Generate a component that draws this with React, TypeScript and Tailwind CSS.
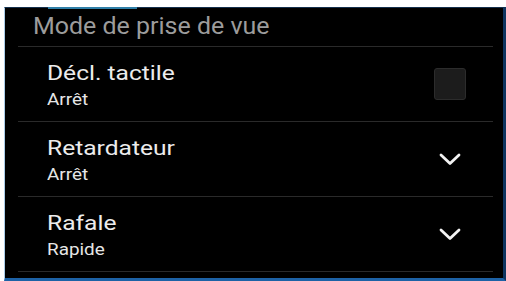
import React from "react";

const Chevron = () => (
  <svg width="22" height="13" viewBox="0 0 22 13" fill="none">
    <path d="M2 2 L11 10.5 L20 2" stroke="#f2f2f2" strokeWidth="2.8" strokeLinecap="round" strokeLinejoin="round" />
  </svg>
);

const Row = ({ title, sub, right }: { title: string; sub: string; right: React.ReactNode }) => (
  <div className="flex flex-col">
    <div className="h-[74px] flex items-center pl-[42px] pr-[37px]">
      <div className="flex-1 flex flex-col items-start pt-[2px]">
        <div className="text-[21px] leading-[24px] text-[#ececec] origin-left scale-x-[1.17]">{title}</div>
        <div className="text-[16px] leading-[20px] text-[#e6e6e6] mt-[5px] origin-left scale-x-[1.18]">{sub}</div>
      </div>
      <div className="w-[32px] flex items-center justify-center">{right}</div>
    </div>
    <div className="h-px bg-[#2a2a2a] ml-[13px] mr-[10px]" />
  </div>
);

export default function App() {
  return (
    <div className="w-[506px] h-[281px] bg-white pt-[7px] pl-[4px] relative" style={{ fontFamily: "Roboto, 'Noto Sans', sans-serif" }}>
      <div className="h-[274px] bg-black border-l border-l-[#a9cbe6] border-r-[3px] border-r-[#0e3560] border-t border-t-[#14304d] border-b-[3px] border-b-[#1d62a6] flex flex-col">
        <div className="h-[39px] flex flex-col">
          <div className="h-[38px] pl-[28px] pt-[4px] flex items-start">
            <div className="text-[24px] leading-[28px] text-[#9c9c9c] origin-left scale-x-[1.04]">Mode de prise de vue</div>
          </div>
          <div className="h-px bg-[#2a2a2a] ml-[13px] mr-[10px]" />
        </div>
        <Row
          title="Décl. tactile"
          sub="Arrêt"
          right={<div className="w-[32px] h-[32px] rounded-[3px] bg-[#1c1c1c] border border-[#2c2c2c]" />}
        />
        <Row title="Retardateur" sub="Arrêt" right={<Chevron />} />
        <Row title="Rafale" sub="Rapide" right={<Chevron />} />
      </div>
      <div className="absolute left-[48px] top-[7px] w-[89px] h-[2px] bg-[#2f7fa8]" />
    </div>
  );
}
